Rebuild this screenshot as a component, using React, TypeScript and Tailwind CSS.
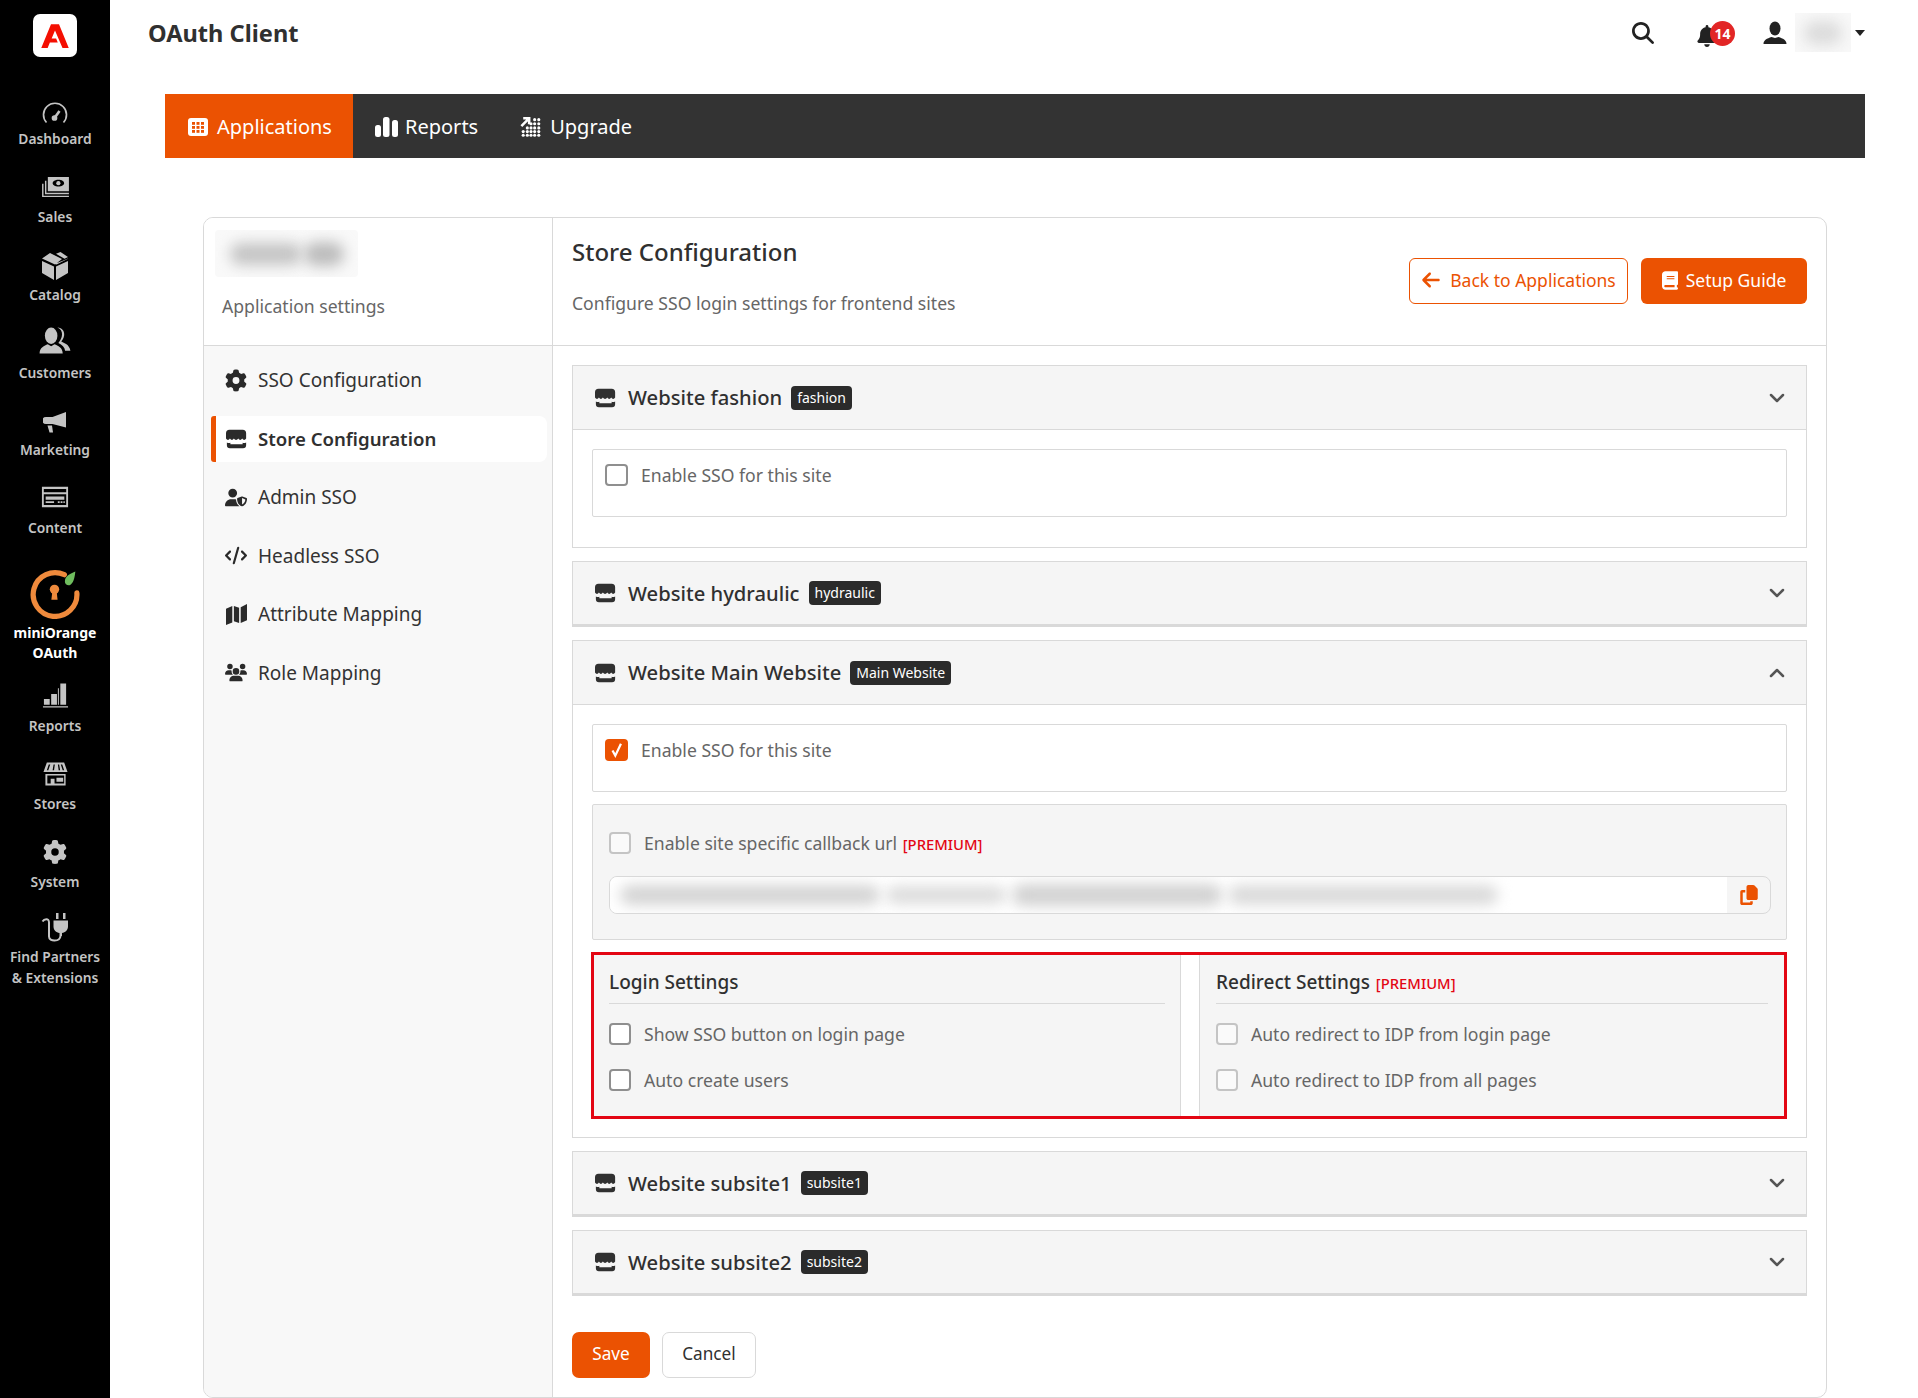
import { ReactNode } from "react";
import { ChevronDown, ChevronUp } from "lucide-react";
import {
  FaArrowLeft,
  FaBell,
  FaBook,
  FaCode,
  FaCopy,
  FaGear,
  FaMagnifyingGlass,
  FaUserShield,
  FaUsers,
} from "react-icons/fa6";

function AdobeMark() {
  return (
    <svg viewBox="0 0 24 24" className="h-[30px] w-[30px]" fill="#f40f02">
      <path d="M8.800 2.500h6.400L23 21.500h-5L12 7.500 9.300 14h3.600l1.300 3.200H7.900l-1.800 4.300H1z" />
    </svg>
  );
}

function StoreIcon({ className }: { className?: string }) {
  return (
    <svg viewBox="0 0 24 22" className={className} fill="currentColor">
      <path d="M5 .5h14a4 4 0 0 1 4 4v6c-1.200 2-3.300 2-4.500 0-1.200 2-3.300 2-4.500 0-1.200 2-3.800 2-5 0-1.200 2-3.300 2-4.500 0-1.200 2-3.300 2-4.500 0v-6a4 4 0 0 1 4-4z" />
      <path d="M1 15c1.500.8 3 .8 4 .2v1.800h14v-1.800c1 .6 2.500.6 4-.2v3a3.500 3.500 0 0 1-3.500 3.500h-15A3.500 3.500 0 0 1 1 18z" />
    </svg>
  );
}

function GridTileIcon() {
  return (
    <svg viewBox="0 0 20 20" className="h-[20px] w-[20px]">
      <rect x="0" y="1" width="20" height="18" rx="3" fill="white" />
      {[5, 9, 13].map((y) =>
        [4, 8.500, 13].map((x) => <rect key={`${x}-${y}`} x={x} y={y} width="3" height="2.800" fill="#eb5202" />)
      )}
    </svg>
  );
}

function BarsIcon() {
  return (
    <svg viewBox="0 0 23 20" className="h-[20px] w-[23px]" fill="currentColor">
      <rect x="0" y="8" width="6" height="12" rx="2.500" />
      <rect x="8" y="0" width="6.500" height="20" rx="2.500" />
      <rect x="17" y="3" width="6" height="17" rx="2.500" />
    </svg>
  );
}

function UpgradeIcon() {
  const dots = [
    [8, 13], [12, 13], [16, 13], [20.500, 13],
    [12, 8.500], [16, 8.500], [20.500, 8.500], [20.500, 4], [16, 4],
    [3.500, 17], [8, 17], [12, 17], [16, 17], [20.500, 17],
    [3.500, 21], [8, 21], [12, 21], [16, 21], [20.500, 21],
  ];
  return (
    <svg viewBox="0 0 24 24" className="h-[22px] w-[22px]" fill="currentColor">
      {dots.map(([x, y]) => (
        <circle key={`${x}-${y}`} cx={x} cy={y} r="1.700" />
      ))}
      <path d="M1.500 11 8.500 4M3.500 2.500h6.500V9" fill="none" stroke="currentColor" strokeWidth="2.800" />
    </svg>
  );
}

function UserIcon() {
  return (
    <svg viewBox="0 0 24 24" className="h-[24px] w-[24px]" fill="currentColor">
      <ellipse cx="12" cy="7.500" rx="5.500" ry="7" />
      <path d="M.5 23c0-4 3.500-5.500 8-7l3.500 1 3.500-1c4.500 1.500 8 3 8 7z" />
    </svg>
  );
}

function GaugeIcon() {
  return (
    <svg viewBox="0 0 26 22" className="h-[22px] w-[26px]" fill="none" stroke="currentColor" strokeWidth="1.700">
      <path d="M4.500 20.500a11.500 11.500 0 1 1 17 0" />
      <path d="M12.500 16 17.500 9" strokeWidth="2.600" />
      <circle cx="12.500" cy="16" r="2" fill="currentColor" />
      <path d="M5.500 13.500v.1M8 7.500v.1M13 5v.1M20.500 13.500v.1" strokeWidth="2" />
    </svg>
  );
}

function SalesIcon() {
  return (
    <svg viewBox="0 0 30 24" className="h-[23px] w-[29px]" fill="currentColor">
      <path fillRule="evenodd" d="M7 1h22v15H7zM18 4c-3.500 0-6 1.800-6 3.500S14.500 11 18 11s6-1.700 6-3.500S21.500 4 18 4z" />
      <circle cx="18" cy="7.500" r="2.200" />
      <path d="M4 5h1.500v12.500H29V19H4z" />
      <path d="M1 8h1.500v12.500H29V22H1z" />
    </svg>
  );
}

function CatalogIcon() {
  return (
    <svg viewBox="0 0 28 28" className="h-[28px] w-[28px]" fill="currentColor">
      <path d="M14 12.500 1 6.500 9 1l12 6zM23 8.200l4-1.700v.2L15.500 12.500l-1.500-.7z" />
      <path d="M15 1.800 19.500 0 27 5l-3.500 1.800zM1 9l12 5.500V28L1 21zM15 14.500 27 9v12l-12 7z" />
    </svg>
  );
}

function CustomersIcon() {
  return (
    <svg viewBox="0 0 32 28" className="h-[27px] w-[32px]" fill="currentColor">
      <ellipse cx="12" cy="9" rx="6.500" ry="8.500" />
      <path d="M0 27.500c0-6 5-8 8.500-9.500l3.500 2 3.500-2c3.500 1.500 8.500 3.500 8.500 9.500z" />
      <path d="M18.500.5c5 0 7.500 4 7 8-.4 3-1.800 5-3 6.500l5 2.500c2 1 4 4 4.500 7h-5.500c-.5-4-3-6-7-8 2-3 3.800-5 3.800-9 0-3-1.300-5.500-4.800-7z" />
    </svg>
  );
}

function MarketingIcon() {
  return (
    <svg viewBox="0 0 24 22" className="h-[22px] w-[24px]" fill="currentColor">
      <path d="M3 6h6.500L23 1v15.500L9.500 13H3a3.500 3.500 0 0 1 0-7z" />
      <path d="M4.500 14.500h4.500l1 7H6.500z" />
    </svg>
  );
}

function ContentIcon() {
  return (
    <svg viewBox="0 0 30 22" className="h-[22px] w-[28px]" fill="currentColor">
      <path fillRule="evenodd" d="M1 0h28v22H1zM3 2.500V6h24V2.500zM3 8v11.500h24V8z" />
      <path d="M5 10.500h20V14H5zM5 15.500h9v2H5zM18 15.500h2v2h-2zM21 15.500h2v2h-2zM24 15.500h1.500v2H24z" />
    </svg>
  );
}

function ReportsIcon() {
  return (
    <svg viewBox="0 0 28 26" className="h-[26px] w-[27px]" fill="currentColor">
      <path d="M2 16h6v6H2zM9.500 11h6v11h-6zM16.500 5h1v17h-1zM19 0h6v22h-6zM1 23.500h26V25H1z" />
    </svg>
  );
}

function StoresIcon() {
  return (
    <svg viewBox="0 0 26 24" className="h-[24px] w-[25px]" fill="currentColor">
      <path fillRule="evenodd" d="M4 0h18l3.500 10H.5zM6 2 4 8h1.500l2-6zM11 2l-1 6h1.500l.8-6zM15.500 2l.8 6h1.500l-1-6zM20 2h-1.500l2 6H22z" />
      <path fillRule="evenodd" d="M2.500 12h21v12h-21zM4.500 13.500V22h3.500v-5h4v5h10v-8.500zM14 16h7v4h-7z" />
    </svg>
  );
}

function PartnersIcon() {
  return (
    <svg viewBox="0 0 28 30" className="h-[30px] w-[28px]" fill="currentColor">
      <path d="M15 0h2.500v6H15zM22 0h2.500v6H22zM12.500 7.500h14.500v6c0 3.500-2.800 6-6 6.500v3h-2.500v-3c-3.300-.5-6-3-6-6.500z" />
      <path d="M1.500 8.500C3 6 8 4.500 8 9.500v14c0 5.500 11 5.500 11.500-.5" fill="none" stroke="currentColor" strokeWidth="2" />
    </svg>
  );
}

function MapIcon() {
  return (
    <svg viewBox="0 0 20 20" className="h-[21px] w-[21px]" fill="currentColor">
      <path d="M0 4.500 6 2v15.500L0 20zM20 0v15.500L14 18V3zM7.500 2l5 1.500V18l-5-1.500z" />
    </svg>
  );
}

function MiniOrangeLogo() {
  return (
    <svg viewBox="0 0 48 48" className="h-[50px] w-[50px] shrink-0" fill="none">
      <path d="M33 5.500A21 21 0 1 0 45 23" stroke="#ef8a3c" strokeWidth="5" strokeLinecap="round" />
      <circle cx="23.500" cy="19.500" r="4.500" fill="#ef8a3c" />
      <path d="M21.500 21h4l1 8.500h-6z" fill="#ef8a3c" />
      <path d="M33.500 12c.2-5 4-7 10-9.500-.5 6-2 12-5.500 13-2 .6-4.700-1-4.500-3.500z" fill="#6fbd5e" />
    </svg>
  );
}

const topItems: { label: string; icon: ReactNode; gap: string }[] = [
  { label: "Dashboard", icon: <GaugeIcon />, gap: "mb-[5px]" },
  { label: "Sales", icon: <SalesIcon />, gap: "mb-[8px]" },
  { label: "Catalog", icon: <CatalogIcon />, gap: "mb-[5px]" },
  { label: "Customers", icon: <CustomersIcon />, gap: "mb-[9px]" },
  { label: "Marketing", icon: <MarketingIcon />, gap: "mb-[7px]" },
  { label: "Content", icon: <ContentIcon />, gap: "mb-[10px]" },
];

const bottomItems: { label: string; icon: ReactNode; gap: string }[] = [
  { label: "Reports", icon: <ReportsIcon />, gap: "mb-[7px]" },
  { label: "Stores", icon: <StoresIcon />, gap: "mb-[8px]" },
  { label: "System", icon: <FaGear className="h-[24px] w-[24px]" />, gap: "mb-[8px]" },
];

function SideItem({ label, icon, gap }: { label: string; icon: ReactNode; gap: string }) {
  return (
    <div className="flex h-[77.900px] flex-col items-center justify-end text-[#c4c4c4]">
      <div className={gap}>{icon}</div>
      <span className="text-[13.800px] font-semibold leading-[20px]">{label}</span>
    </div>
  );
}

function Sidebar() {
  return (
    <aside className="flex h-full w-[110px] shrink-0 flex-col items-center bg-black">
      <div className="mb-[14px] mt-[14px] flex h-[43px] w-[44px] items-center justify-center rounded-[7px] bg-white">
        <AdobeMark />
      </div>
      <div className="w-full">
        {topItems.map((item) => (
          <SideItem key={item.label} {...item} />
        ))}
      </div>
      <div className="flex h-[120px] flex-col items-center pt-[31px]">
        <MiniOrangeLogo />
        <span className="mt-[4px] shrink-0 text-center text-[14px] font-bold leading-[20px] text-white">
          miniOrange
          <br />
          OAuth
        </span>
      </div>
      <div className="w-full">
        {bottomItems.map((item) => (
          <SideItem key={item.label} {...item} />
        ))}
        <div className="flex flex-col items-center pt-[21px] text-[#c4c4c4]">
          <PartnersIcon />
          <span className="mt-[3px] text-center text-[13.800px] font-semibold leading-[21px]">
            Find Partners
            <br />& Extensions
          </span>
        </div>
      </div>
    </aside>
  );
}

function TopBar() {
  return (
    <header className="flex h-[94px] shrink-0 items-start justify-between pl-[38px] pr-[53px]">
      <h1 className="mt-[15px] text-[23.600px] font-bold leading-[36px] text-[#303030]">OAuth Client</h1>
      <div className="flex items-center pt-[13px]">
        <FaMagnifyingGlass className="mr-[43px] h-[22px] w-[22px] text-[#222]" />
        <div className="relative mr-[28px] h-[26px] w-[38px]">
          <FaBell className="absolute left-0 top-[5px] h-[22px] w-[20px] text-[#222]" />
          <span className="absolute left-[13px] top-[1px] flex h-[25px] w-[25px] items-center justify-center rounded-full bg-[#e22626] text-[14px] font-bold text-white">
            14
          </span>
        </div>
        <span className="mr-[8px] text-[#222]">
          <UserIcon />
        </span>
        <div className="mr-[4px] flex h-[39px] w-[56px] items-center justify-center overflow-hidden bg-[#f8f8f8]">
          <div className="h-[24px] w-[38px] rounded-full bg-[#dcdcdc] blur-[7px]" />
        </div>
        <div className="h-0 w-0 border-x-[5px] border-t-[6px] border-x-transparent border-t-[#222]" />
      </div>
    </header>
  );
}

function TabBar() {
  return (
    <nav className="ml-[55px] mr-[53px] flex h-[64px] shrink-0 items-stretch bg-[#333] pt-[1px] text-[20px] text-white">
      <div className="-mt-[1px] flex w-[188px] items-center gap-[9px] bg-[#eb5202] pl-[23px] pt-[1px]">
        <GridTileIcon />
        <span>Applications</span>
      </div>
      <div className="flex items-center gap-[7px] pl-[22px]">
        <BarsIcon />
        <span>Reports</span>
      </div>
      <div className="flex items-center gap-[8px] pl-[42px]">
        <UpgradeIcon />
        <span>Upgrade</span>
      </div>
    </nav>
  );
}

const navItems: { label: string; icon: ReactNode; active?: boolean }[] = [
  { label: "SSO Configuration", icon: <FaGear className="h-[23px] w-[23px]" /> },
  { label: "Store Configuration", icon: <StoreIcon className="h-[20px] w-[21px]" />, active: true },
  { label: "Admin SSO", icon: <FaUserShield className="h-[21px] w-[24px]" /> },
  { label: "Headless SSO", icon: <FaCode className="h-[21px] w-[24px]" /> },
  { label: "Attribute Mapping", icon: <MapIcon /> },
  { label: "Role Mapping", icon: <FaUsers className="h-[23px] w-[28px]" /> },
];

function SettingsNav() {
  return (
    <div className="flex w-[349px] shrink-0 flex-col border-r border-[#d9d9d9]">
      <div className="h-[128px] shrink-0 border-b border-[#d9d9d9] bg-white">
        <div className="ml-[11px] mt-[12px] flex h-[47px] w-[143px] items-center justify-center gap-[2px] overflow-hidden rounded-[4px] bg-[#f9f9f9]">
          <div className="h-[22px] w-[72px] rounded-full bg-[#c4c4c4] blur-[7px]" />
          <div className="h-[24px] w-[40px] rounded-full bg-[#bcbcbc] blur-[7px]" />
        </div>
        <p className="ml-[18px] mt-[16px] text-[17.600px] leading-[26px] text-[#666]">Application settings</p>
      </div>
      <div className="flex flex-1 flex-col gap-[12.600px] bg-[#f8f8f8] pl-[7px] pr-[5px] pt-[11px]">
        {navItems.map((item) => (
          <div
            key={item.label}
            className={
              item.active
                ? "flex h-[46px] items-center rounded-l-[3px] rounded-r-[8px] border-l-[5px] border-[#eb5202] bg-white pl-[9px] text-[18.600px] font-semibold text-[#303030]"
                : "flex h-[46px] items-center pl-[14px] text-[19px] text-[#333]"
            }
          >
            <span className="mr-[11px] flex w-[22px] justify-center text-[#2a2a2a]">{item.icon}</span>
            <span>{item.label}</span>
          </div>
        ))}
      </div>
    </div>
  );
}

function CheckBox({ checked, faint, small }: { checked?: boolean; faint?: boolean; small?: boolean }) {
  if (checked) {
    return (
      <span className="flex h-[22px] w-[23px] shrink-0 items-center justify-center rounded-[4px] bg-[#eb5202]">
        <svg viewBox="0 0 16 16" className="h-[18px] w-[18px]" fill="none" stroke="white" strokeWidth="2">
          <path d="M4 8.500 6.500 13 11.500 2.500" />
        </svg>
      </span>
    );
  }
  return (
    <span
      className={
        (faint ? "border-[#c4c4c4] bg-[#fafafa] " : "border-[#8f8f8f] bg-white ") +
        (small ? "h-[22px] w-[22px] " : "h-[22px] w-[23px] ") +
        "shrink-0 rounded-[4px] border-2"
      }
    />
  );
}

function CheckRow({ label, faint }: { label: ReactNode; faint?: boolean }) {
  return (
    <div className="flex h-[22px] items-center gap-[13px] text-[17.600px] text-[#666]">
      <CheckBox faint={faint} small />
      <span>{label}</span>
    </div>
  );
}

function Premium() {
  return <span className="ml-[1px] text-[14.800px] font-medium leading-none text-[#e30613]">[PREMIUM]</span>;
}

function SiteAccordion({ name, badge, open, up, children }: { name: string; badge: string; open?: boolean; up?: boolean; children?: ReactNode }) {
  return (
    <section className={open ? "border border-[#d9d9d9] bg-white" : "border border-b-[3px] border-[#d9d9d9] bg-[#f5f5f5]"}>
      <div className={open ? "flex h-[64px] items-center border-b border-[#d9d9d9] bg-[#f5f5f5] pl-[22px] pr-[17px]" : "flex h-[62px] items-center pl-[22px] pr-[17px]"}>
        <StoreIcon className="h-[20px] w-[21px] text-[#303030]" />
        <span className="ml-[12px] text-[20.200px] font-medium text-[#303030]">{name}</span>
        <span className="ml-[9px] rounded-[4px] bg-[#2b2b2b] px-[6px] text-[14px] leading-[24px] text-white">{badge}</span>
        {up ? (
          <ChevronUp className="ml-auto h-[24px] w-[24px] text-[#555]" strokeWidth={2.500} />
        ) : (
          <ChevronDown className="ml-auto h-[24px] w-[24px] text-[#555]" strokeWidth={2.500} />
        )}
      </div>
      {children}
    </section>
  );
}

function EnableBox({ checked }: { checked?: boolean }) {
  return (
    <div className="mb-[12px] flex h-[68px] items-start gap-[13px] rounded-[2px] border border-[#d9d9d9] bg-white pl-[12px] pt-[14px] text-[17.600px] text-[#666]">
      <CheckBox checked={checked} />
      <span className="leading-[22px]">Enable SSO for this site</span>
    </div>
  );
}

function MainWebsiteBody() {
  return (
    <div className="px-[19px] pb-[18px] pt-[19px]">
      <EnableBox checked />
      <div className="mb-[12px] h-[136px] rounded-[2px] border border-[#d9d9d9] bg-[#f5f5f5] pl-[16px] pr-[15px] pt-[27px]">
        <CheckRow
          faint
          label={
            <>
              Enable site specific callback url <Premium />
            </>
          }
        />
        <div className="mt-[22px] flex h-[38px] items-stretch overflow-hidden rounded-[8px] border border-[#d9d9d9]">
          <div className="flex flex-1 items-center gap-[6px] overflow-hidden bg-white pl-[10px]">
            <div className="h-[20px] w-[260px] rounded-full bg-[#d4d4d4] blur-[7px]" />
            <div className="h-[18px] w-[120px] rounded-full bg-[#dcdcdc] blur-[7px]" />
            <div className="h-[22px] w-[210px] rounded-full bg-[#d2d2d2] blur-[7px]" />
            <div className="h-[20px] w-[270px] rounded-full bg-[#dadada] blur-[7px]" />
          </div>
          <div className="flex w-[43px] items-center justify-center">
            <FaCopy className="h-[20px] w-[18px] text-[#eb5202]" />
          </div>
        </div>
      </div>
      <div className="-ml-px flex h-[167px] border-[3px] border-[#e30613] bg-white">
        <div className="w-[587px] border-r border-[#d9d9d9] bg-[#f5f5f5] px-[15px]">
          <h3 className="h-[49px] border-b border-[#d9d9d9] pt-[12px] text-[19px] font-medium leading-[30px] text-[#303030]">Login Settings</h3>
          <div className="mt-[19px] flex flex-col gap-[24px]">
            <CheckRow label="Show SSO button on login page" />
            <CheckRow label="Auto create users" />
          </div>
        </div>
        <div className="ml-[18px] flex-1 border-l border-[#d9d9d9] bg-[#f5f5f5] px-[16px]">
          <h3 className="h-[49px] border-b border-[#d9d9d9] pt-[12px] text-[19px] font-medium leading-[30px] text-[#303030]">
            Redirect Settings <Premium />
          </h3>
          <div className="mt-[19px] flex flex-col gap-[24px]">
            <CheckRow faint label="Auto redirect to IDP from login page" />
            <CheckRow faint label="Auto redirect to IDP from all pages" />
          </div>
        </div>
      </div>
    </div>
  );
}

function StoreConfig() {
  return (
    <div className="flex min-w-0 flex-1 flex-col">
      <div className="flex h-[128px] shrink-0 items-start justify-between border-b border-[#d9d9d9] pl-[19px] pr-[19px]">
        <div>
          <h2 className="mt-[16px] text-[24px] font-medium leading-[36px] text-[#303030]">Store Configuration</h2>
          <p className="mt-[20px] text-[17.600px] leading-[26px] text-[#666]">Configure SSO login settings for frontend sites</p>
        </div>
        <div className="mt-[40px] flex gap-[13px] text-[17.500px]">
          <button className="flex h-[46px] w-[219px] items-center justify-center gap-[9px] rounded-[6px] border border-[#eb5202] bg-white pb-[2px] text-[#eb5202]">
            <FaArrowLeft className="h-[20px] w-[20px]" />
            Back to Applications
          </button>
          <button className="flex h-[46px] w-[166px] items-center justify-center gap-[8px] rounded-[6px] bg-[#eb5202] pb-[2px] text-white">
            <FaBook className="h-[19px] w-[16px]" />
            Setup Guide
          </button>
        </div>
      </div>
      <div className="flex flex-1 flex-col px-[19px] pt-[19px]">
        <div className="flex flex-col gap-[13px]">
          <SiteAccordion name="Website fashion" badge="fashion" open>
            <div className="px-[19px] pb-[18px] pt-[19px]">
              <EnableBox />
            </div>
          </SiteAccordion>
          <SiteAccordion name="Website hydraulic" badge="hydraulic" />
          <SiteAccordion name="Website Main Website" badge="Main Website" open up>
            <MainWebsiteBody />
          </SiteAccordion>
          <SiteAccordion name="Website subsite1" badge="subsite1" />
          <SiteAccordion name="Website subsite2" badge="subsite2" />
        </div>
        <div className="mt-[36px] flex gap-[12px] text-[17.200px]">
          <button className="h-[46px] w-[78px] rounded-[7px] bg-[#eb5202] pb-[2px] text-white">Save</button>
          <button className="h-[46px] w-[94px] rounded-[7px] border border-[#d9d9d9] bg-white pb-[2px] text-[#303030]">Cancel</button>
        </div>
      </div>
    </div>
  );
}

export default function App() {
  return (
    <div className="flex h-[1398px] w-[1918px] overflow-hidden bg-white font-['Noto_Sans',sans-serif]">
      <Sidebar />
      <main className="flex min-w-0 flex-1 flex-col">
        <TopBar />
        <TabBar />
        <div className="ml-[93px] mr-[91px] mt-[59px] flex flex-1 overflow-hidden rounded-[10px] border border-[#d9d9d9]">
          <SettingsNav />
          <StoreConfig />
        </div>
      </main>
    </div>
  );
}
